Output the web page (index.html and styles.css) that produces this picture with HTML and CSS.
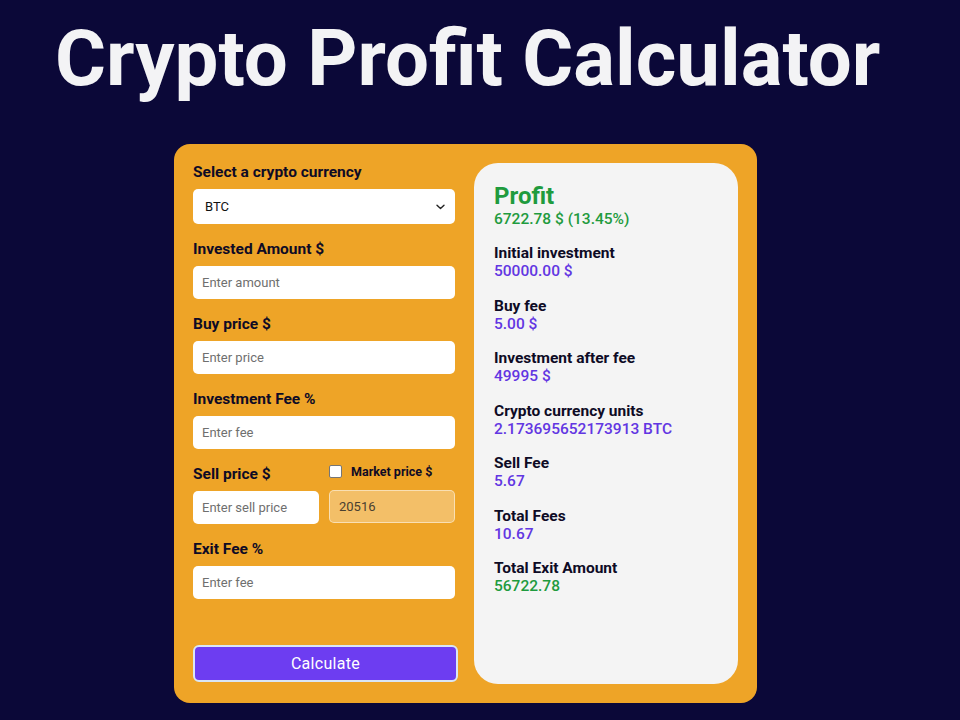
FILE: index.html
```html
<!DOCTYPE html>
<html lang="en">
<head>
<meta charset="utf-8">
<title>Crypto Profit Calculator</title>
<link rel="stylesheet" href="styles.css">
</head>
<body>
<h1 class="title">Crypto Profit Calculator</h1>
<div class="card">
  <form class="form">
    <label class="label">Select a crypto currency</label>
    <div class="select">
      <span>BTC</span>
      <svg class="chev" width="9" height="6" viewBox="0 0 9 6"><path d="M1 1.2l3.5 3.3 3.5-3.3" fill="none" stroke="#222" stroke-width="1.4" stroke-linecap="round" stroke-linejoin="round"/></svg>
    </div>
    <label class="label">Invested Amount $</label>
    <input class="input" type="text" placeholder="Enter amount">
    <label class="label">Buy price $</label>
    <input class="input" type="text" placeholder="Enter price">
    <label class="label">Investment Fee %</label>
    <input class="input" type="text" placeholder="Enter fee">
    <div class="split">
      <div class="col">
        <label class="label">Sell price $</label>
        <input class="input" type="text" placeholder="Enter sell price">
      </div>
      <div class="col">
        <div class="check-row">
          <span class="checkbox"></span>
          <span class="small-label">Market price $</span>
        </div>
        <input class="input market" type="text" value="20516" disabled>
      </div>
    </div>
    <label class="label">Exit Fee %</label>
    <input class="input" type="text" placeholder="Enter fee">
    <button type="button" class="btn">Calculate</button>
  </form>
  <div class="results">
    <div class="profit-head">Profit</div>
    <div class="profit-val">6722.78 $ (13.45%)</div>
    <div class="item"><div class="k">Initial investment</div><div class="v">50000.00 $</div></div>
    <div class="item"><div class="k">Buy fee</div><div class="v">5.00 $</div></div>
    <div class="item"><div class="k">Investment after fee</div><div class="v">49995 $</div></div>
    <div class="item"><div class="k">Crypto currency units</div><div class="v">2.173695652173913 BTC</div></div>
    <div class="item"><div class="k">Sell Fee</div><div class="v">5.67</div></div>
    <div class="item"><div class="k">Total Fees</div><div class="v">10.67</div></div>
    <div class="item"><div class="k">Total Exit Amount</div><div class="v green">56722.78</div></div>
  </div>
</div>
</body>
</html>
```
FILE: styles.css
```css
* { box-sizing: border-box; }
html, body { margin: 0; padding: 0; }
body {
  background: #0b0838;
  font-family: Roboto, "Liberation Sans", sans-serif;
  width: 960px;
  height: 720px;
  overflow: hidden;
}
.title {
  margin: 0;
  padding: 11px 0 0 55px;
  font-size: 78px;
  line-height: 96px;
  font-weight: 700;
  color: #f3f3f5;
}
.card {
  margin: 37px 0 0 174px;
  width: 583px;
  height: 559px;
  background: #eea427;
  border-radius: 16px;
  padding: 19px;
  display: grid;
  grid-template-columns: 262px 264px;
  column-gap: 19px;
}
.form {
  display: flex;
  flex-direction: column;
  margin: 0;
}
.label {
  display: block;
  font-size: 15.5px;
  line-height: 18px;
  font-weight: 700;
  color: #0e0b25;
  margin-bottom: 8px;
}
.select {
  height: 35px;
  background: #fff;
  border-radius: 5px;
  display: flex;
  align-items: center;
  justify-content: space-between;
  padding: 0 10px 0 12px;
  font-size: 13px;
  color: #111;
  margin-bottom: 16px;
}
.input {
  display: block;
  width: 100%;
  height: 33px;
  border: none;
  border-radius: 5px;
  background: #fff;
  padding: 0 9px;
  font-family: Roboto, "Liberation Sans", sans-serif;
  font-size: 13px;
  color: #555;
  margin: 0 0 16px 0;
  outline: none;
}
.input::placeholder { color: #6f6f6f; }
.split {
  display: grid;
  grid-template-columns: 126px 126px;
  column-gap: 10px;
}
.col { display: flex; flex-direction: column; }
.check-row {
  display: flex;
  align-items: center;
  height: 18px;
  margin-top: -3px;
  margin-bottom: 10px;
}
.checkbox {
  width: 13px;
  height: 13px;
  background: #fff;
  border: 1px solid #767676;
  border-radius: 2px;
  margin-right: 9px;
}
.small-label {
  font-size: 12.5px;
  font-weight: 700;
  color: #0e0b25;
}
.input.market {
  background: rgba(255, 255, 255, 0.3);
  border: 1px solid rgba(255, 255, 255, 0.5);
  color: #4a4030;
  margin-bottom: 17px;
}
.btn {
  margin-top: auto;
  margin-bottom: 2px;
  width: 265px;
  height: 37px;
  background: #6d3df1;
  border: 2px solid #d9e6f5;
  border-radius: 6px;
  color: #fff;
  font-family: Roboto, "Liberation Sans", sans-serif;
  font-size: 16px;
  letter-spacing: 0.3px;
}
.results {
  background: #f4f4f4;
  border-radius: 24px;
  padding: 19px 20px;
}
.profit-head {
  font-size: 24px;
  line-height: 28px;
  font-weight: 700;
  color: #1f9b3e;
}
.profit-val {
  font-size: 15.5px;
  line-height: 18px;
  font-weight: 500;
  color: #1f9b3e;
  margin-bottom: 16px;
}
.item { margin-bottom: 16.5px; }
.k {
  font-size: 15.5px;
  line-height: 18px;
  font-weight: 700;
  color: #0e0b25;
}
.v {
  font-size: 15.5px;
  line-height: 18px;
  font-weight: 500;
  color: #6236e2;
}
.v.green { color: #1f9b3e; }
```
